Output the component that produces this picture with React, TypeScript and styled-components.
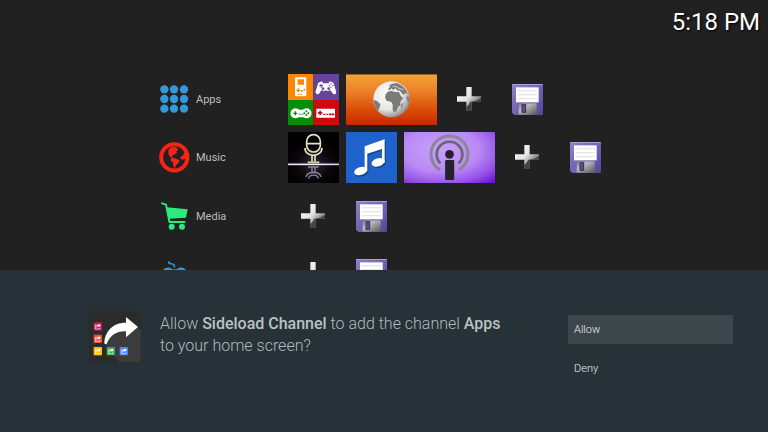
import React from 'react';
import styled, { createGlobalStyle } from 'styled-components';

const GlobalStyle = createGlobalStyle`
  *, *::before, *::after { box-sizing: border-box; }
  body {
    margin: 0;
    background: #212121;
    font-family: Roboto, "Liberation Sans", sans-serif;
  }
`;

const Screen = styled.div`
  min-height: 100vh;
  display: flex;
  flex-direction: column;
`;

const Home = styled.main`
  flex: 0 0 auto;
  height: 62.5vh;
  overflow: hidden;
  background: #212121;
`;

const Header = styled.header`
  display: flex;
  justify-content: flex-end;
  height: 70px;
  padding: 8px 8px 0;
`;

const Clock = styled.time`
  color: #fff;
  font-size: 24px;
  line-height: 28px;
  text-shadow: 1px 1px 2px #000;
`;

const RowList = styled.div`
  display: grid;
  grid-template-rows: repeat(4, 1fr);
  height: 234px;
  padding-left: 159px;
`;

const Row = styled.section`
  display: flex;
  align-items: center;
`;

const RowTitle = styled.h2`
  display: flex;
  align-items: center;
  gap: 6px;
  flex: 0 0 129px;
  margin: 0;
  color: #bdbdbd;
  font-size: 11px;
  font-weight: 400;
  line-height: 16px;
`;

const RowLabel = styled.span`
  padding-top: 1px;
`;

const Tiles = styled.div`
  display: flex;
  gap: 7px;
`;

const Tile = styled.button<{ $wide?: boolean }>`
  display: flex;
  align-items: center;
  justify-content: center;
  width: ${(p) => (p.$wide ? 91 : 51)}px;
  height: 51px;
  padding: 0;
  border: 0;
  background: transparent;
`;

const Drawing = styled.svg<{ $w: number; $h: number }>`
  display: block;
  flex: none;
  width: ${(p) => p.$w}px;
  height: ${(p) => p.$h}px;
`;

const Dialog = styled.section`
  flex: 1;
  display: flex;
  align-items: flex-start;
  padding: 41px 35px 0 89px;
  background: #263238;
`;

const Message = styled.p`
  flex: 0 1 350px;
  margin: 2px 0 0 19px;
  color: #b4babd;
  font-size: 16px;
  font-weight: 300;
  line-height: 22px;
`;

const Strong = styled.strong`
  font-weight: 500;
  color: #bcc1c3;
`;

const Actions = styled.div`
  display: flex;
  flex-direction: column;
  gap: 10px;
  width: 165px;
  margin: 4px 0 0 auto;
`;

const Action = styled.button<{ $focused?: boolean }>`
  height: 29px;
  padding: 1px 6px 0;
  border: 0;
  border-radius: 1px;
  background: ${(p) => (p.$focused ? '#3c474b' : 'transparent')};
  color: #eceeef;
  font-family: inherit;
  font-size: 11px;
  font-weight: 300;
  line-height: 16px;
  text-align: left;
`;

const DotsIcon = () => (
  <Drawing $w={31} $h={31} viewBox="0 0 93 93" fill="#3498db" aria-hidden="true">
    {[16, 45, 74].map((y) => [16, 45, 75].map((x) => <circle key={`${x}-${y}`} cx={x} cy={y} r="12.5" />))}
  </Drawing>
);

const EarthIcon = () => (
  <Drawing $w={31} $h={31} viewBox="0 0 93 93" fill="#f72316" aria-hidden="true">
    <circle cx="46" cy="46" r="39.5" fill="none" stroke="#f72316" strokeWidth="12" />
    <path d="M29 21 38 15 48 14 55 18 57 25 51 29 54 33 48 37 42 39 38 44 43 48 37 47 31 42 28 34Z" />
    <path d="M36 49 46 48 62 55 58 64 51 69 48 79 43 72 42 62 36 56Z" />
    <path d="M81 28 74 34 73 40 64 45 65 51 72 53 78 50 84 56V33Z" />
  </Drawing>
);

const CartIcon = () => (
  <Drawing $w={31} $h={31} viewBox="0 0 93 93" fill="#2bec7b" aria-hidden="true">
    <path d="M9 7 21 11 31 60" fill="none" stroke="#2bec7b" strokeWidth="6" strokeLinecap="round" strokeLinejoin="round" />
    <path d="M23 19 86 25 81 50 29 53Z" />
    <path d="M28 60H79V66H30Z" />
    <circle cx="38" cy="77" r="9" />
    <circle cx="69" cy="77" r="9" />
  </Drawing>
);

const GamesIcon = () => (
  <Drawing $w={31} $h={31} viewBox="0 0 93 93" fill="#2f97d8" aria-hidden="true">
    <path d="M30 7C24 19 50 9 46 26" fill="none" stroke="#2f97d8" strokeWidth="5" />
    <path d="M10 38C13 24 33 22 40 31H53C60 22 80 24 83 38L88 68C84 83 72 74 64 60H29C20 76 9 81 6 68Z" />
  </Drawing>
);

const GamesTile = () => (
  <Drawing $w={51} $h={51} viewBox="0 0 153 153" aria-hidden="true">
    <path fill="#fb8604" d="M0 0H76V78H0Z" />
    <path fill="#65459b" d="M76 0H153V78H76Z" />
    <path fill="#068e0a" d="M0 78H76V153H0Z" />
    <path fill="#cc0a0f" d="M76 78H153V153H76Z" />
    <rect x="21" y="10" width="34" height="57" rx="3" fill="#fff" />
    <path fill="#fb8604" d="M29 16H48V32H29ZM25 47H29V43H33V47H37V51H33V55H29V51H25Z" />
    <g fill="#fb8604">
      <circle cx="42" cy="51" r="3" />
      <circle cx="49" cy="47" r="3" />
      <path d="M31 60H35V63H31ZM38 60H42V63H38Z" />
    </g>
    <path fill="#fff" d="M91 26 102 22 105 28H122L125 22 136 26 144 51C147 62 136 65 132 55L126 48C120 53 117 51 114 49 109 53 105 51 101 48L95 56C91 65 81 61 83 51Z" />
    <g fill="#65459b">
      <path d="M94 33H98V29H101V33H105V37H101V41H98V37H94Z" />
      <circle cx="105" cy="44" r="4" />
      <circle cx="122" cy="44" r="4" />
      <circle cx="129" cy="30" r="2" />
      <circle cx="129" cy="40" r="2" />
      <circle cx="124" cy="35" r="2" />
      <circle cx="134" cy="35" r="2" />
    </g>
    <path fill="#fff" d="M23 103C29 103 30 107 35 107H43C48 107 50 103 55 103A15 15 0 1 1 47 130H31A15 15 0 1 1 23 103Z" />
    <g fill="#068e0a">
      <path d="M16 116H20V112H24V116H28V120H24V124H20V120H16ZM33 119H38V122H33ZM41 119H46V122H41Z" />
      <circle cx="55" cy="112" r="3" />
      <circle cx="55" cy="123" r="3" />
      <circle cx="49" cy="118" r="3" />
      <circle cx="61" cy="118" r="3" />
    </g>
    <rect x="85" y="104" width="56" height="27" rx="1" fill="#fff" />
    <g fill="#cc0a0f">
      <path d="M90 114H94V110H99V114H103V119H99V123H94V119H90ZM106 119H112V123H106ZM115 119H121V123H115Z" />
      <circle cx="127" cy="121" r="3.5" />
      <circle cx="135" cy="121" r="3.5" />
    </g>
  </Drawing>
);

const BrowserTile = () => (
  <Drawing $w={91} $h={51} viewBox="0 0 270 153" preserveAspectRatio="none" aria-hidden="true">
    <defs>
      <linearGradient id="sunset" x1="0" y1="0" x2="0" y2="1">
        <stop offset="0" stopColor="#f3a43b" />
        <stop offset=".35" stopColor="#ea8028" />
        <stop offset=".72" stopColor="#d94a07" />
        <stop offset="1" stopColor="#c62800" />
      </linearGradient>
      <radialGradient id="ocean" cx=".38" cy=".35" r=".68">
        <stop offset="0" stopColor="#fff" />
        <stop offset=".65" stopColor="#e5e5e5" />
        <stop offset="1" stopColor="#8e8e8e" />
      </radialGradient>
    </defs>
    <path fill="url(#sunset)" d="M0 0H270V153H0Z" />
    <path fill="#9b642c" d="M0 0H270V3H0Z" />
    <circle cx="135" cy="76" r="54" fill="url(#ocean)" />
    <g fill="#7d7b79">
      <path d="M123 54 134 50 145 54 157 54 163 67 170 72 161 84 162 93 155 98 149 112 142 115 138 104 139 94 134 83 121 81 116 72 117 62Z" />
      <path d="M124 45 131 39 128 34 138 29 151 27 166 35 178 49 182 60 176 57 170 63 160 50 152 49 147 43 140 48 135 43 130 49Z" />
      <path d="M81 77 93 82 102 91 99 102 95 112 86 98Z" />
      <path d="M165 90 170 86 167 99 162 103Z" />
      <path d="M179 67 188 70 187 88 181 76Z" />
    </g>
    <path fill="none" stroke="#c8c8c8" strokeWidth="3" d="M138 38 148 37 157 43 170 47" />
  </Drawing>
);

const MicTile = () => (
  <Drawing $w={51} $h={51} viewBox="0 0 153 153" aria-hidden="true">
    <defs>
      <radialGradient id="stage" cx=".5" cy=".63" r=".5">
        <stop offset="0" stopColor="#32263a" />
        <stop offset=".6" stopColor="#0c080e" />
        <stop offset="1" stopColor="#020102" />
      </radialGradient>
      <linearGradient id="beam">
        <stop offset="0" stopColor="#eee2f2" />
        <stop offset=".5" stopColor="#fff" />
        <stop offset="1" stopColor="#dac6e0" />
      </linearGradient>
    </defs>
    <path fill="url(#stage)" d="M0 0H153V153H0Z" />
    <g fill="none" stroke="#e4e5bd" strokeWidth="5">
      <rect x="56" y="8" width="41" height="52" rx="20" />
      <path d="M56 35H97M51 48C50 77 102 77 102 48M72 68V88M81 68V88M59 91H94" />
    </g>
    <path d="M0 97H153" stroke="#79558a" strokeWidth="9" opacity=".6" />
    <path fill="url(#beam)" d="M0 95H153V99H0Z" />
    <g fill="none" stroke="#8b858f" strokeWidth="4">
      <path d="M60 105H92M72 107V121M81 107V121M54 135C57 117 96 117 99 135M62 140C63 126 90 126 91 140" />
    </g>
  </Drawing>
);

const NoteTile = () => (
  <Drawing $w={51} $h={51} viewBox="0 0 153 153" aria-hidden="true">
    <path fill="#1d63cb" d="M0 0H153V153H0Z" />
    {[
      { fill: '#144181', shift: 'translate(3 4)' },
      { fill: '#fff', shift: undefined },
    ].map(({ fill, shift }) => (
      <g key={fill} fill={fill} transform={shift}>
        <path d="M56 43 116 22V93H108V51L64 65V118H56Z" />
        <ellipse cx="44" cy="117" rx="20" ry="12" transform="rotate(-17 44 117)" />
        <ellipse cx="96" cy="91" rx="20" ry="12" transform="rotate(-17 96 91)" />
      </g>
    ))}
  </Drawing>
);

const PodcastTile = () => (
  <Drawing $w={91} $h={51} viewBox="0 0 270 153" preserveAspectRatio="none" aria-hidden="true">
    <defs>
      <radialGradient id="violet" cx=".4" cy=".35" r=".85">
        <stop offset="0" stopColor="#c6a1fa" />
        <stop offset=".5" stopColor="#b989f5" />
        <stop offset=".78" stopColor="#9653e8" />
        <stop offset="1" stopColor="#6a13d3" />
      </radialGradient>
    </defs>
    <path fill="url(#violet)" d="M0 0H270V153H0Z" />
    <path d="M107 114A55 55 0 1 1 163 114" fill="none" stroke="#8b8792" strokeWidth="9" />
    <path d="M108 94A38 38 0 1 1 162 94" fill="none" stroke="#6a6574" strokeWidth="8" />
    <circle cx="135" cy="67" r="13" fill="#26222b" />
    <rect x="122" y="84" width="27" height="60" rx="3" fill="#26222b" />
  </Drawing>
);

const PlusIcon = () => (
  <Drawing $w={25} $h={25} viewBox="0 0 75 75" aria-hidden="true">
    <defs>
      <linearGradient id="steel" x1="0" y1="0" x2="1" y2="1">
        <stop offset="0" stopColor="#fff" />
        <stop offset=".45" stopColor="#e3e3e3" />
        <stop offset=".72" stopColor="#858585" />
      </linearGradient>
    </defs>
    <path fill="url(#steel)" d="M28 0H44V28H72V44H44V72H28V44H0V28H28Z" />
    <path fill="#444" d="M72 32V44H44V72H28V60Q34 56 40 44Q60 42 72 32Z" />
  </Drawing>
);

const DiskIcon = () => (
  <Drawing $w={31} $h={31} viewBox="0 0 93 93" aria-hidden="true">
    <defs>
      <linearGradient id="shell" x1="0" y1="0" x2="1" y2="1">
        <stop offset="0" stopColor="#9181ca" />
        <stop offset="1" stopColor="#554599" />
      </linearGradient>
      <linearGradient id="shutter" x1="0" y1="0" x2="1" y2="1">
        <stop offset="0" stopColor="#777" />
        <stop offset=".35" stopColor="#bbb" />
        <stop offset="1" stopColor="#555" />
      </linearGradient>
    </defs>
    <path fill="url(#shell)" d="M2 0H91Q93 0 93 2V90Q93 93 90 93H7L0 86V2Q0 0 2 0Z" />
    <path fill="#aaa0dc" d="M1 0H92V3H1Z" />
    <path fill="#fff" d="M12 10H80V55H12Z" />
    <path fill="#ddd" d="M17 19H75V22H17ZM17 31H75V34H17ZM17 43H75V46H17Z" />
    <path fill="url(#shutter)" d="M20 58H74V92H20Z" />
    <path fill="#5c4c9a" stroke="#373244" strokeWidth="3" d="M30 62H41V85H30Z" />
  </Drawing>
);

const badges = [
  { x: 14, y: 34, color: '#c2185b' },
  { x: 14, y: 71, color: '#e84d3d' },
  { x: 14, y: 108, color: '#fbbc05' },
  { x: 53, y: 108, color: '#32a852' },
  { x: 92, y: 108, color: '#4285f4' },
];

const AppIcon = () => (
  <Drawing $w={52} $h={52} viewBox="0 0 156 156" role="img" aria-label="Sideload Channel">
    <rect x="0" y="1" width="155" height="153" rx="9" fill="#2b2b2b" />
    <path fill="#3c3c3c" d="M147 49 155 57V145Q155 154 146 154H93L77 137 49 99 65 73Z" />
    {badges.map(({ x, y, color }) => (
      <g key={`${x}-${y}`}>
        <rect x={x} y={y} width="25" height="25" fill={color} />
        <path fill="none" stroke="#fff" strokeWidth="2" d={`M${x + 10} ${y + 8}H${x + 5}V${y + 20}H${x + 19}V${y + 16}`} />
        <path fill="#fff" d={`M${x + 15} ${y + 4}L${x + 22} ${y + 9}L${x + 15} ${y + 15}V${y + 11}Q${x + 11} ${y + 11} ${x + 8} ${y + 17}Q${x + 8} ${y + 8} ${x + 15} ${y + 7}Z`} />
      </g>
    ))}
    <path fill="#fff" d="M111 18 147 48 111 79V61C84 60 64 72 53 98Q50 102 46 97C47 60 74 34 111 35Z" />
  </Drawing>
);

type Shortcut = { name: string; art: React.ReactNode; wide?: boolean };

const rows: { title: string; icon: React.ReactNode; shortcuts: Shortcut[] }[] = [
  {
    title: 'Apps',
    icon: <DotsIcon />,
    shortcuts: [
      { name: 'Games', art: <GamesTile /> },
      { name: 'Browser', art: <BrowserTile />, wide: true },
    ],
  },
  {
    title: 'Music',
    icon: <EarthIcon />,
    shortcuts: [
      { name: 'Microphone', art: <MicTile /> },
      { name: 'Music player', art: <NoteTile /> },
      { name: 'Podcasts', art: <PodcastTile />, wide: true },
    ],
  },
  { title: 'Media', icon: <CartIcon />, shortcuts: [] },
  { title: '', icon: <GamesIcon />, shortcuts: [] },
];

export default function App() {
  return (
    <Screen>
      <GlobalStyle />
      <Home>
        <Header>
          <Clock dateTime="17:18">5:18 PM</Clock>
        </Header>
        <RowList>
          {rows.map((row) => (
            <Row key={row.title}>
              <RowTitle>
                {row.icon}
                <RowLabel>{row.title}</RowLabel>
              </RowTitle>
              <Tiles>
                {row.shortcuts.map((item) => (
                  <Tile key={item.name} $wide={item.wide} aria-label={item.name}>
                    {item.art}
                  </Tile>
                ))}
                <Tile aria-label="Add">
                  <PlusIcon />
                </Tile>
                <Tile aria-label="Save">
                  <DiskIcon />
                </Tile>
              </Tiles>
            </Row>
          ))}
        </RowList>
      </Home>
      <Dialog role="dialog" aria-labelledby="question">
        <AppIcon />
        <Message id="question">
          Allow <Strong>Sideload Channel</Strong> to add the channel <Strong>Apps</Strong> to your home screen?
        </Message>
        <Actions>
          <Action $focused>Allow</Action>
          <Action>Deny</Action>
        </Actions>
      </Dialog>
    </Screen>
  );
}
